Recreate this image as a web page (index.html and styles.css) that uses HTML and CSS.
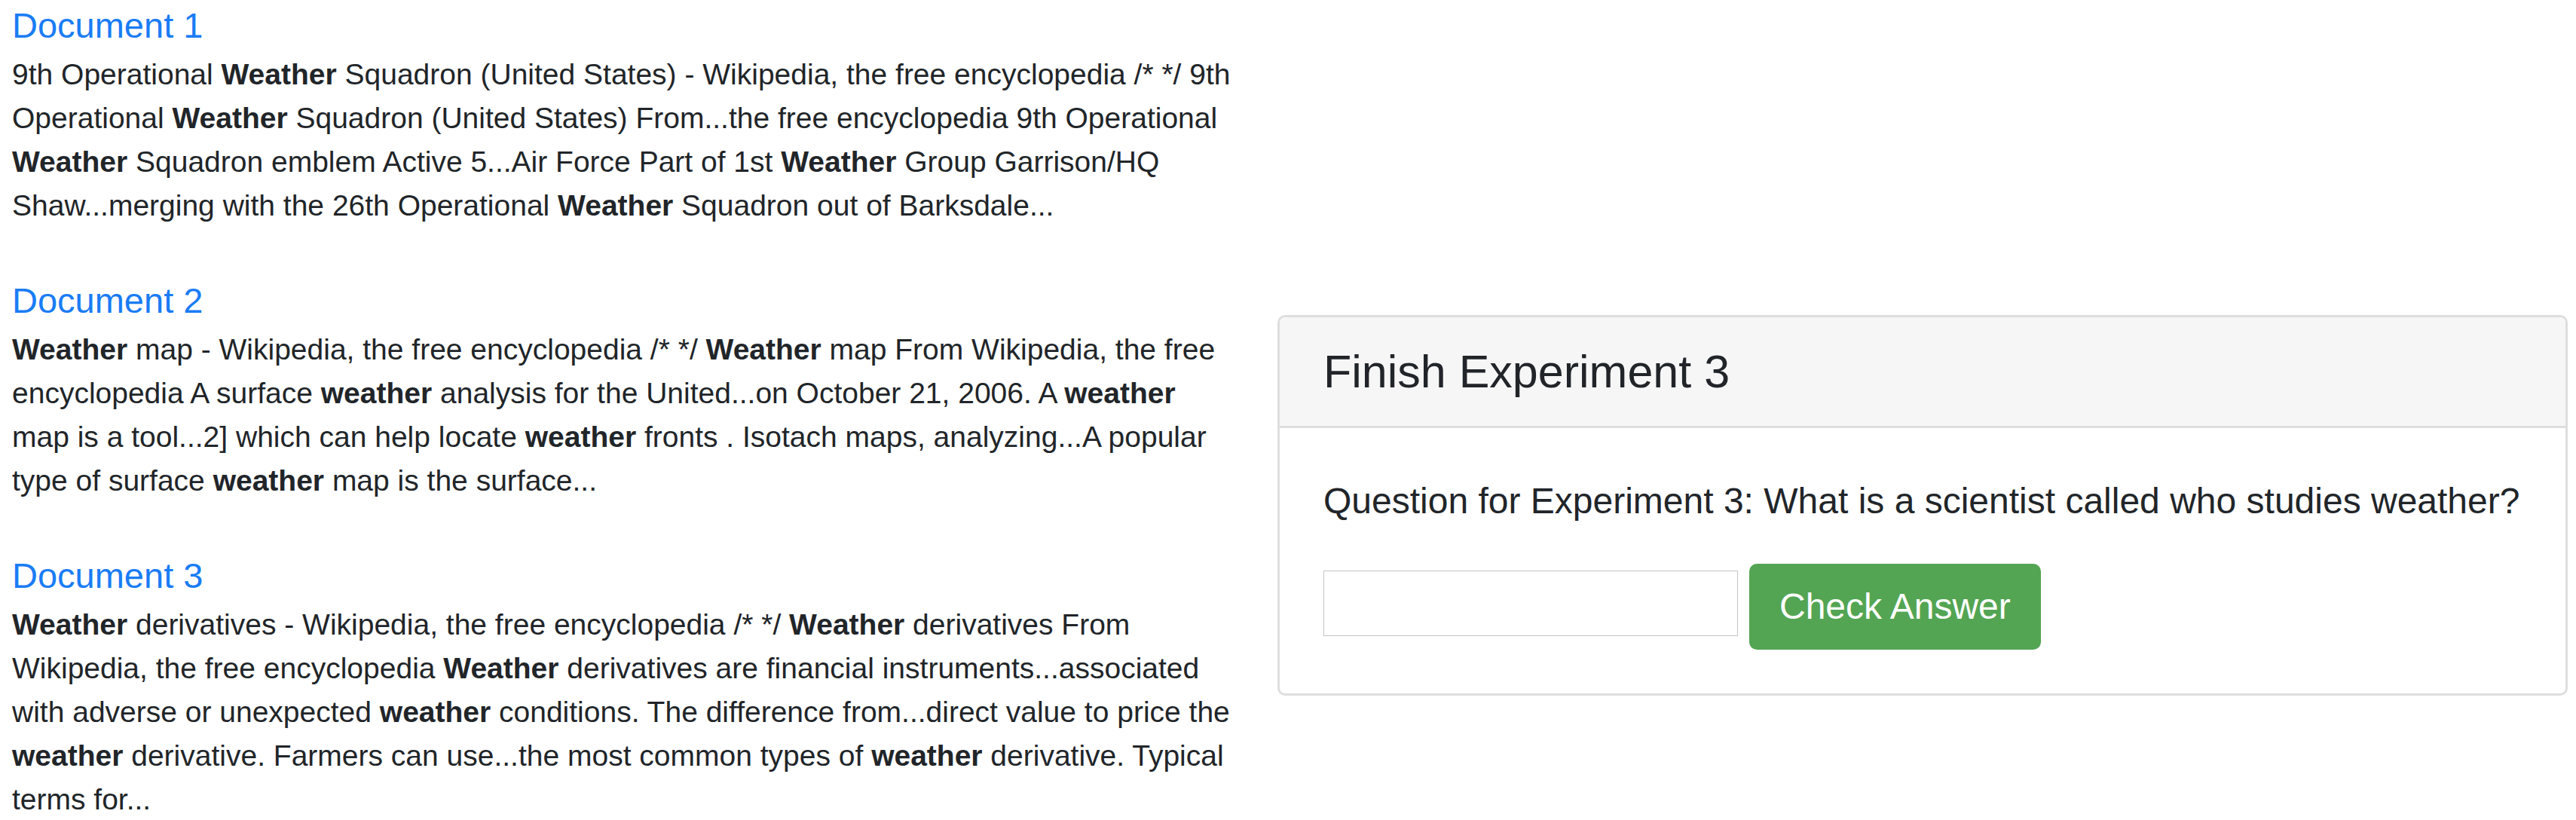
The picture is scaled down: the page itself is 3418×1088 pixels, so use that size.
FILE: index.html
```html
<!DOCTYPE html>
<html lang="en">
<head>
<meta charset="utf-8">
<title>Finish Experiment 3</title>
<link rel="stylesheet" href="styles.css">
</head>
<body>
<div class="page">
  <div class="docs">
    <div class="doc">
      <h5 class="doc-title"><a href="#">Document 1</a></h5>
      <p class="doc-text">9th Operational <b>Weather</b> Squadron (United States) - Wikipedia, the free encyclopedia /* */ 9th Operational <b>Weather</b> Squadron (United States) From...the free encyclopedia 9th Operational <b>Weather</b> Squadron emblem Active 5...Air Force Part of 1st <b>Weather</b> Group Garrison/HQ Shaw...merging with the 26th Operational <b>Weather</b> Squadron out of Barksdale...</p>
    </div>
    <div class="doc">
      <h5 class="doc-title"><a href="#">Document 2</a></h5>
      <p class="doc-text"><b>Weather</b> map - Wikipedia, the free encyclopedia /* */ <b>Weather</b> map From Wikipedia, the free encyclopedia A surface <b>weather</b> analysis for the United...on October 21, 2006. A <b>weather</b> map is a tool...2] which can help locate <b>weather</b> fronts . Isotach maps, analyzing...A popular type of surface <b>weather</b> map is the surface...</p>
    </div>
    <div class="doc">
      <h5 class="doc-title"><a href="#">Document 3</a></h5>
      <p class="doc-text"><b>Weather</b> derivatives - Wikipedia, the free encyclopedia /* */ <b>Weather</b> derivatives From Wikipedia, the free encyclopedia <b>Weather</b> derivatives are financial instruments...associated with adverse or unexpected <b>weather</b> conditions. The difference from...direct value to price the <b>weather</b> derivative. Farmers can use...the most common types of <b>weather</b> derivative. Typical terms for...</p>
    </div>
  </div>
  <div class="side">
    <div class="card">
      <div class="card-header">
        <h3 class="card-title">Finish Experiment 3</h3>
      </div>
      <div class="card-body">
        <p class="question">Question for Experiment 3: What is a scientist called who studies weather?</p>
        <div class="answer-row">
          <input class="answer-input" type="text">
          <button class="btn-check" type="button">Check Answer</button>
        </div>
      </div>
    </div>
  </div>
</div>
</body>
</html>
```
FILE: styles.css
```css
html, body {
  margin: 0;
  padding: 0;
  background: #ffffff;
}
body {
  font-family: "Liberation Sans", Arial, sans-serif;
  color: #212529;
  font-size: 39px;
  line-height: 58px;
}
.page {
  display: flex;
  align-items: flex-start;
  padding: 6px 11px 0 16px;
}
.docs {
  width: 1622px;
  flex: none;
}
.doc-title {
  margin: 0 0 8px 0;
  font-size: 47px;
  line-height: 56px;
  font-weight: normal;
}
.doc-title a {
  color: #1a7cf5;
  text-decoration: none;
}
.doc-text {
  margin: 0 0 69px 0;
}
.doc:last-child .doc-text {
  margin-bottom: 0;
}
.doc-text b {
  font-weight: bold;
}
.side {
  flex: 1;
  padding-left: 57px;
  padding-top: 412px;
}
.card {
  border: 3px solid #dedede;
  border-radius: 10px;
  overflow: hidden;
  background: #fff;
}
.card-header {
  background: #f6f6f6;
  border-bottom: 3px solid #dedede;
  padding: 36px 58px 35px 58px;
}
.card-title {
  margin: 0;
  font-size: 61px;
  line-height: 73px;
  font-weight: normal;
  color: #212529;
}
.card-body {
  padding: 61px 58px 58px 58px;
}
.question {
  margin: 0 0 47px 0;
  font-size: 48px;
  line-height: 72px;
}
.answer-row {
  display: flex;
  align-items: flex-start;
  gap: 15px;
}
.answer-input {
  box-sizing: border-box;
  width: 550px;
  height: 87px;
  margin-top: 9px;
  border: 1px solid #c4c4c4;
  background: #fff;
  padding: 0 10px;
  font-size: 38px;
  font-family: inherit;
}
.btn-check {
  box-sizing: border-box;
  height: 114px;
  padding: 0 40px;
  border: none;
  border-radius: 10px;
  background: #53a553;
  color: #ffffff;
  font-family: "Liberation Sans", Arial, sans-serif;
  font-size: 48px;
  line-height: 114px;
}
```
